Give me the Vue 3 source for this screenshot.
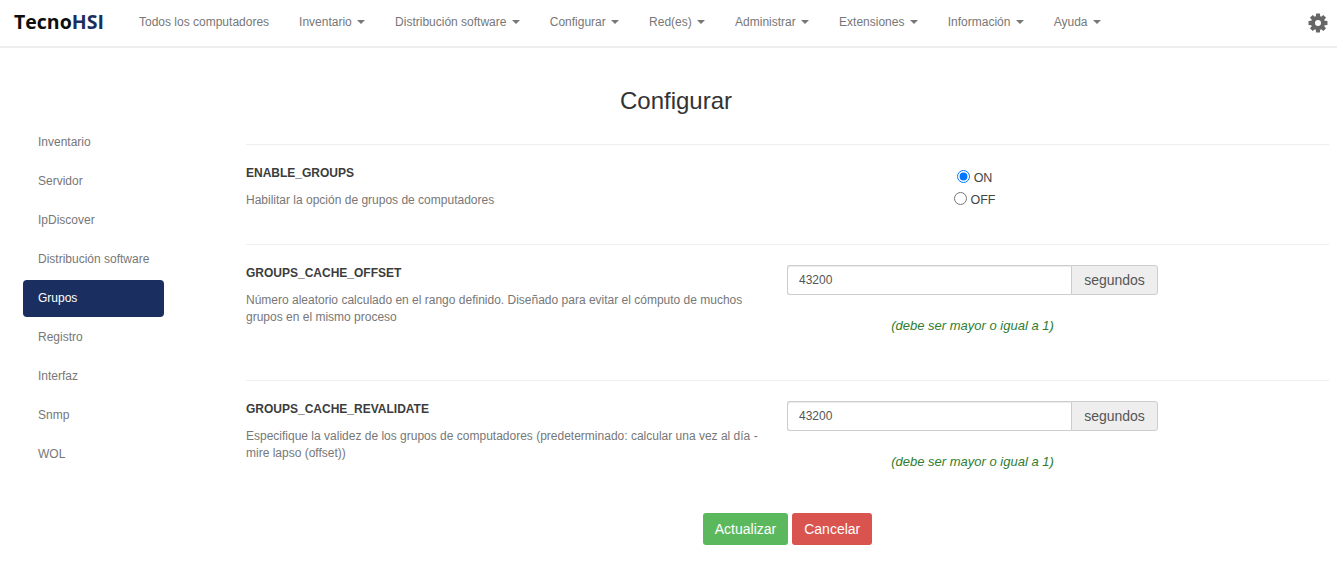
<script setup>
const menu = [
  { label: 'Todos los computadores', caret: false },
  { label: 'Inventario', caret: true },
  { label: 'Distribución software', caret: true },
  { label: 'Configurar', caret: true },
  { label: 'Red(es)', caret: true },
  { label: 'Administrar', caret: true },
  { label: 'Extensiones', caret: true },
  { label: 'Información', caret: true },
  { label: 'Ayuda', caret: true },
]
const side = ['Inventario', 'Servidor', 'IpDiscover', 'Distribución software', 'Grupos', 'Registro', 'Interfaz', 'Snmp', 'WOL']
const rows = [
  {
    name: 'GROUPS_CACHE_OFFSET',
    desc: 'Número aleatorio calculado en el rango definido. Diseñado para evitar el cómputo de muchos grupos en el mismo proceso',
  },
  {
    name: 'GROUPS_CACHE_REVALIDATE',
    desc: 'Especifique la validez de los grupos de computadores (predeterminado: calcular una vez al día - mire lapso (offset))',
  },
]
const gearPath = (() => {
  const cx = 12, cy = 12, R = 11.6, r = 8.4, teeth = 8
  const pts = []
  for (let i = 0; i < teeth; i++) {
    const a = (i * 2 * Math.PI) / teeth
    for (const [rad, d] of [[r, -0.32], [R, -0.2], [R, 0.2], [r, 0.32]]) {
      pts.push(`${(cx + rad * Math.sin(a + d)).toFixed(2)} ${(cy - rad * Math.cos(a + d)).toFixed(2)}`)
    }
  }
  return `M${pts.join('L')}Z M12 8.4a3.6 3.6 0 1 0 0 7.2a3.6 3.6 0 1 0 0-7.2Z`
})()
</script>

<template>
  <div class="page">
    <header class="navbar">
      <div class="brand">Tecno<span class="brand-accent">HSI</span></div>
      <nav class="menu">
        <a v-for="m in menu" :key="m.label" class="menu-item">
          {{ m.label }}<span v-if="m.caret" class="caret"></span>
        </a>
      </nav>
      <svg class="gear" viewBox="0 0 24 24" aria-hidden="true">
        <path :d="gearPath" fill-rule="evenodd" />
      </svg>
    </header>

    <div class="body">
      <aside class="sidebar">
        <a v-for="s in side" :key="s" class="side-item" :class="{ active: s === 'Grupos' }">{{ s }}</a>
      </aside>

      <main class="content">
        <h1 class="title">Configurar</h1>

        <section class="row row-first">
          <div class="info">
            <h2 class="name">ENABLE_GROUPS</h2>
            <p class="desc">Habilitar la opción de grupos de computadores</p>
          </div>
          <div class="control radios">
            <label class="radio"><input type="radio" name="enable" checked /> ON</label>
            <label class="radio"><input type="radio" name="enable" /> OFF</label>
          </div>
        </section>

        <section v-for="r in rows" :key="r.name" class="row row-input">
          <div class="info">
            <h2 class="name">{{ r.name }}</h2>
            <p class="desc">{{ r.desc }}</p>
          </div>
          <div class="control">
            <div class="input-group">
              <input class="field" type="text" value="43200" />
              <span class="addon">segundos</span>
            </div>
            <p class="hint">(debe ser mayor o igual a 1)</p>
          </div>
        </section>

        <div class="actions">
          <button class="btn btn-green">Actualizar</button>
          <button class="btn btn-red">Cancelar</button>
        </div>
      </main>
    </div>
  </div>
</template>

<style>
html, body { margin: 0; background: #fff; }
</style>

<style scoped>
.page {
  font-family: "Liberation Sans", Arial, sans-serif;
  font-size: 12px;
  color: #333;
  height: 564px;
  overflow: hidden;
}
.navbar {
  display: flex;
  align-items: center;
  height: 46px;
  border-bottom: 2px solid #eeeeee;
  padding-left: 14px;
  padding-right: 9px;
}
.brand {
  font-family: "Open Sans", sans-serif;
  font-weight: 700;
  font-size: 19.5px;
  color: #0d0d0d;
  width: 110px;
  margin-top: -4px;
}
.brand-accent { color: #1a2f5f; }
.menu { display: flex; flex: 1; margin-top: -3px; }
.menu-item {
  color: #777;
  padding: 0 15px;
  white-space: nowrap;
}
.caret {
  display: inline-block;
  width: 0;
  height: 0;
  margin-left: 5.3px;
  vertical-align: middle;
  border-top: 4px solid #777;
  border-left: 4px solid transparent;
  border-right: 4px solid transparent;
}
.gear { width: 20px; height: 20px; fill: #666; }
.body { display: flex; }
.sidebar {
  width: 141px;
  margin-left: 23px;
  margin-right: 82px;
  padding-top: 76px;
  display: flex;
  flex-direction: column;
  gap: 2px;
}
.side-item {
  height: 37px;
  line-height: 37px;
  padding-left: 15px;
  color: #777;
  border-radius: 4px;
}
.side-item.active { background: #1a2f5f; color: #fff; }
.content { width: 1083px; }
.title {
  margin: 0;
  height: 96px;
  padding-top: 39px;
  padding-right: 223px;
  box-sizing: border-box;
  text-align: center;
  font-size: 24px;
  font-weight: 400;
  line-height: 28px;
  color: #333;
}
.row {
  display: flex;
  border-top: 1px solid #eeeeee;
  box-sizing: border-box;
}
.row-first { height: 100px; }
.row-input { height: 136px; }
.info { width: 541px; padding-top: 21px; box-sizing: border-box; }
.name {
  margin: 0 0 12px;
  font-size: 12px;
  line-height: 14px;
  font-weight: 700;
  color: #3c3c3c;
}
.desc {
  margin: 0;
  width: 516px;
  line-height: 17px;
  color: #777;
}
.control { width: 371px; }
.radios {
  display: flex;
  flex-direction: column;
  align-items: center;
  padding-top: 22px;
  padding-left: 4px;
  box-sizing: border-box;
}
.radio {
  display: flex;
  align-items: center;
  gap: 4px;
  height: 22px;
  font-size: 12.5px;
  color: #444;
}
.radio input { margin: 0 0 4px; width: 13px; height: 13px; }
.input-group { display: flex; height: 30px; margin-top: 20px; }
.field {
  flex: 1;
  min-width: 0;
  box-sizing: border-box;
  height: 30px;
  padding: 0 11px;
  border: 1px solid #ccc;
  border-right: 0;
  border-radius: 3px 0 0 3px;
  font: 12px "Liberation Sans", Arial, sans-serif;
  color: #555;
  box-shadow: inset 0 1px 1px rgba(0, 0, 0, 0.075);
}
.addon {
  box-sizing: border-box;
  width: 87px;
  line-height: 28px;
  text-align: center;
  font-size: 14px;
  color: #555;
  background: #eee;
  border: 1px solid #ccc;
  border-radius: 0 3px 3px 0;
}
.hint {
  margin: 23px 0 0;
  text-align: center;
  font-style: italic;
  font-size: 13px;
  line-height: 16px;
  color: #2f7d2f;
}
.actions {
  display: flex;
  justify-content: center;
  gap: 4px;
  margin-top: -3px;
}
.btn {
  height: 32px;
  padding: 0 12px;
  border: 0;
  border-radius: 3px;
  font: 14px "Liberation Sans", Arial, sans-serif;
  color: #fff;
}
.btn-green { background: #5cb85c; }
.btn-red { background: #d9534f; }
</style>
